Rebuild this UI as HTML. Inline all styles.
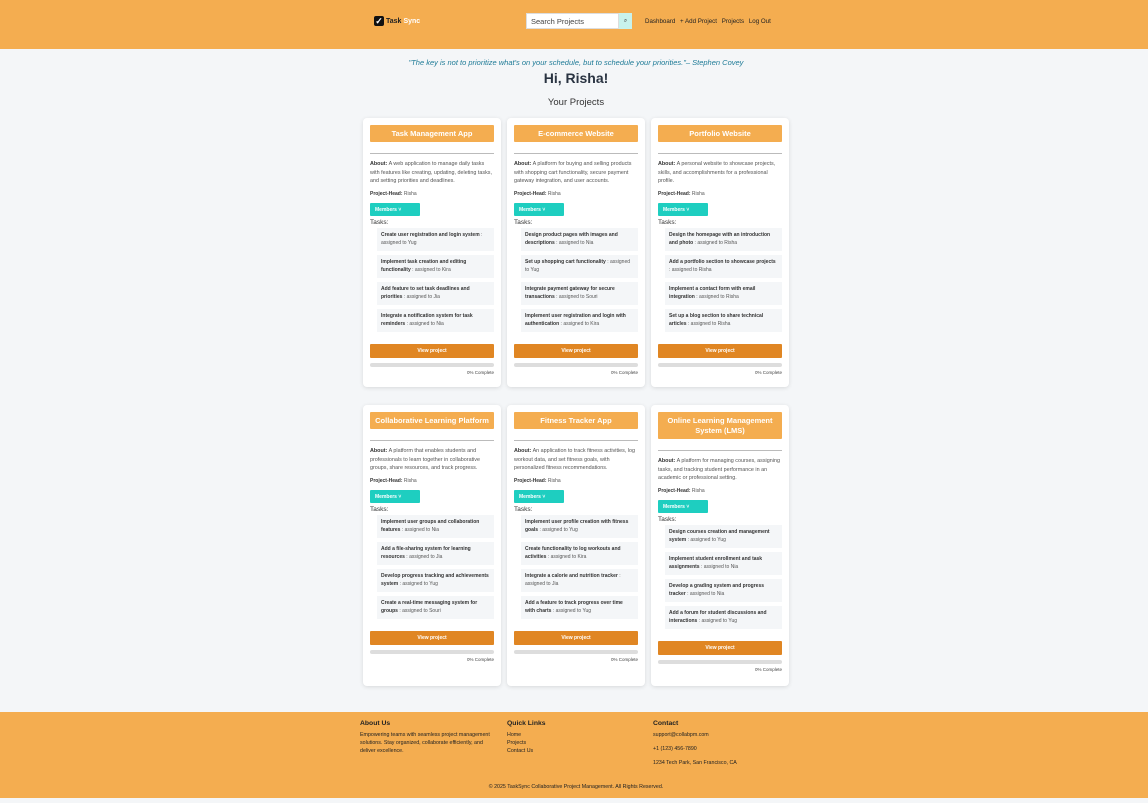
<!DOCTYPE html>
<html><head><style>
*{box-sizing:border-box;margin:0;padding:0}
body{width:1148px;height:803px;background:#f4f6f8;font-family:"Liberation Sans",Arial,sans-serif;position:relative;overflow:hidden;color:#333}
.hdr{position:absolute;left:0;top:0;width:1148px;height:49px;background:#f4ad50}
.logo{position:absolute;left:374px;top:16px;font-size:7px;font-weight:bold;color:#222;display:flex;align-items:center;gap:2px}
.logo .cb{width:10px;height:10px;background:#111;border-radius:2px;color:#fff;font-size:9px;line-height:10px;text-align:center}
.search{position:absolute;left:526px;top:13px;width:93px;height:16px;background:#fff;border:1px solid #ddd;font-size:7.5px;color:#444;padding:3px 4px}
.sbtn{position:absolute;left:619px;top:13px;width:13px;height:16px;background:#c8f2ec;font-size:6px;text-align:center;line-height:16px}
.nav{position:absolute;left:645px;top:18px;font-size:6.2px;color:#222}
.nav span{margin-right:3px}
.quote{position:absolute;left:0;width:1152px;top:58px;text-align:center;font-style:italic;font-size:7.5px;color:#1d7a96}
.hi{position:absolute;left:0;width:1152px;top:70px;text-align:center;font-weight:bold;font-size:14px;color:#2a3442}
.yp{position:absolute;left:0;width:1152px;top:97px;text-align:center;font-size:9.5px;color:#333}
.card{position:absolute;width:138px;background:#fff;border-radius:4px;box-shadow:0 1px 4px rgba(0,0,0,.12);padding:7px}
.title{background:#f4ad50;color:#fff;font-weight:bold;font-size:7.5px;text-align:center;padding:3.5px 4px;line-height:10px;border-radius:1px}
hr{border:none;border-top:1px solid #bbb;margin:11px 0 6px}
.about{font-size:5.4px;line-height:8.5px;color:#555}
b{color:#333}
.ph{font-size:5px;margin-top:5px;color:#555}
.mem{margin-top:6px;width:50px;height:13px;background:#1ecec0;color:#fff;font-size:5px;font-weight:bold;padding:4px 5px;border-radius:1px}
.tl{font-size:6.5px;margin-top:3px;color:#333}
.task{margin:2px 0 0 7px;background:#f4f6f8;padding:3px 4px;font-size:5px;line-height:8px;color:#555;min-height:23px}
.task+.task{margin-top:4px}
.vb{margin-top:12px;height:14px;background:#e08623;color:#fff;font-size:5px;font-weight:bold;text-align:center;line-height:14px;border-radius:1px}
.pb{margin-top:5px;height:4px;background:#ddd;border-radius:2px}
.pc{font-size:4.5px;text-align:right;margin-top:3px;color:#444}
.ftr{position:absolute;left:0;top:712px;width:1148px;height:86px;background:#f4ad50;color:#222}
.fc{position:absolute;top:8px;font-size:5.3px;line-height:8px}
.fc h4{font-size:6.8px;margin-bottom:3px}
.copy{position:absolute;top:72px;left:0;width:1152px;text-align:center;font-size:5.3px}
</style></head><body>
<div class="hdr">
<div class="logo"><div class="cb">✓</div>Task <span style="color:#fff">Sync</span></div>
<div class="search">Search Projects</div><div class="sbtn">⌕</div>
<div class="nav"><span>Dashboard</span> <span>+ Add Project</span> <span>Projects</span> <span>Log Out</span></div>
</div>
<div class="quote">"The key is not to prioritize what's on your schedule, but to schedule your priorities."– Stephen Covey</div>
<div class="hi">Hi, Risha!</div>
<div class="yp">Your Projects</div>

<div class="card" style="left:363px;top:118px;height:269px">
<div class="title">Task Management App</div><hr>
<div class="about"><b>About:</b> A web application to manage daily tasks with features like creating, updating, deleting tasks, and setting priorities and deadlines.</div>
<div class="ph"><b>Project-Head:</b> Risha</div><div class="mem">Members ˅</div><div class="tl">Tasks:</div>
<div class="task"><b>Create user registration and login system</b> : assigned to Yug</div>
<div class="task"><b>Implement task creation and editing functionality</b> : assigned to Kira</div>
<div class="task"><b>Add feature to set task deadlines and priorities</b> : assigned to Jia</div>
<div class="task"><b>Integrate a notification system for task reminders</b> : assigned to Nia</div>
<div class="vb">View project</div><div class="pb"></div><div class="pc">0% Complete</div></div>

<div class="card" style="left:507px;top:118px;height:269px">
<div class="title">E-commerce Website</div><hr>
<div class="about"><b>About:</b> A platform for buying and selling products with shopping cart functionality, secure payment gateway integration, and user accounts.</div>
<div class="ph"><b>Project-Head:</b> Risha</div><div class="mem">Members ˅</div><div class="tl">Tasks:</div>
<div class="task"><b>Design product pages with images and descriptions</b> : assigned to Nia</div>
<div class="task"><b>Set up shopping cart functionality</b> : assigned to Yug</div>
<div class="task"><b>Integrate payment gateway for secure transactions</b> : assigned to Souri</div>
<div class="task"><b>Implement user registration and login with authentication</b> : assigned to Kira</div>
<div class="vb">View project</div><div class="pb"></div><div class="pc">0% Complete</div></div>

<div class="card" style="left:651px;top:118px;height:269px">
<div class="title">Portfolio Website</div><hr>
<div class="about"><b>About:</b> A personal website to showcase projects, skills, and accomplishments for a professional profile.</div>
<div class="ph"><b>Project-Head:</b> Risha</div><div class="mem">Members ˅</div><div class="tl">Tasks:</div>
<div class="task"><b>Design the homepage with an introduction and photo</b> : assigned to Risha</div>
<div class="task"><b>Add a portfolio section to showcase projects</b> : assigned to Risha</div>
<div class="task"><b>Implement a contact form with email integration</b> : assigned to Risha</div>
<div class="task"><b>Set up a blog section to share technical articles</b> : assigned to Risha</div>
<div class="vb">View project</div><div class="pb"></div><div class="pc">0% Complete</div></div>

<div class="card" style="left:363px;top:405px;height:281px">
<div class="title">Collaborative Learning Platform</div><hr>
<div class="about"><b>About:</b> A platform that enables students and professionals to learn together in collaborative groups, share resources, and track progress.</div>
<div class="ph"><b>Project-Head:</b> Risha</div><div class="mem">Members ˅</div><div class="tl">Tasks:</div>
<div class="task"><b>Implement user groups and collaboration features</b> : assigned to Nia</div>
<div class="task"><b>Add a file-sharing system for learning resources</b> : assigned to Jia</div>
<div class="task"><b>Develop progress tracking and achievements system</b> : assigned to Yug</div>
<div class="task"><b>Create a real-time messaging system for groups</b> : assigned to Souri</div>
<div class="vb">View project</div><div class="pb"></div><div class="pc">0% Complete</div></div>

<div class="card" style="left:507px;top:405px;height:281px">
<div class="title">Fitness Tracker App</div><hr>
<div class="about"><b>About:</b> An application to track fitness activities, log workout data, and set fitness goals, with personalized fitness recommendations.</div>
<div class="ph"><b>Project-Head:</b> Risha</div><div class="mem">Members ˅</div><div class="tl">Tasks:</div>
<div class="task"><b>Implement user profile creation with fitness goals</b> : assigned to Yug</div>
<div class="task"><b>Create functionality to log workouts and activities</b> : assigned to Kira</div>
<div class="task"><b>Integrate a calorie and nutrition tracker</b> : assigned to Jia</div>
<div class="task"><b>Add a feature to track progress over time with charts</b> : assigned to Yug</div>
<div class="vb">View project</div><div class="pb"></div><div class="pc">0% Complete</div></div>

<div class="card" style="left:651px;top:405px;height:281px">
<div class="title">Online Learning Management System (LMS)</div><hr>
<div class="about"><b>About:</b> A platform for managing courses, assigning tasks, and tracking student performance in an academic or professional setting.</div>
<div class="ph"><b>Project-Head:</b> Risha</div><div class="mem">Members ˅</div><div class="tl">Tasks:</div>
<div class="task"><b>Design courses creation and management system</b> : assigned to Yug</div>
<div class="task"><b>Implement student enrollment and task assignments</b> : assigned to Nia</div>
<div class="task"><b>Develop a grading system and progress tracker</b> : assigned to Nia</div>
<div class="task"><b>Add a forum for student discussions and interactions</b> : assigned to Yug</div>
<div class="vb">View project</div><div class="pb"></div><div class="pc">0% Complete</div></div>

<div class="ftr">
<div class="fc" style="left:360px;width:135px"><h4>About Us</h4>Empowering teams with seamless project management solutions. Stay organized, collaborate efficiently, and deliver excellence.</div>
<div class="fc" style="left:507px"><h4>Quick Links</h4>Home<br>Projects<br>Contact Us</div>
<div class="fc" style="left:653px"><h4>Contact</h4>support@collabpm.com<div style="margin-top:6px">+1 (123) 456-7890</div><div style="margin-top:6px">1234 Tech Park, San Francisco, CA</div></div>
<div class="copy">© 2025 TaskSync Collaborative Project Management. All Rights Reserved.</div>
</div>
</body></html>
